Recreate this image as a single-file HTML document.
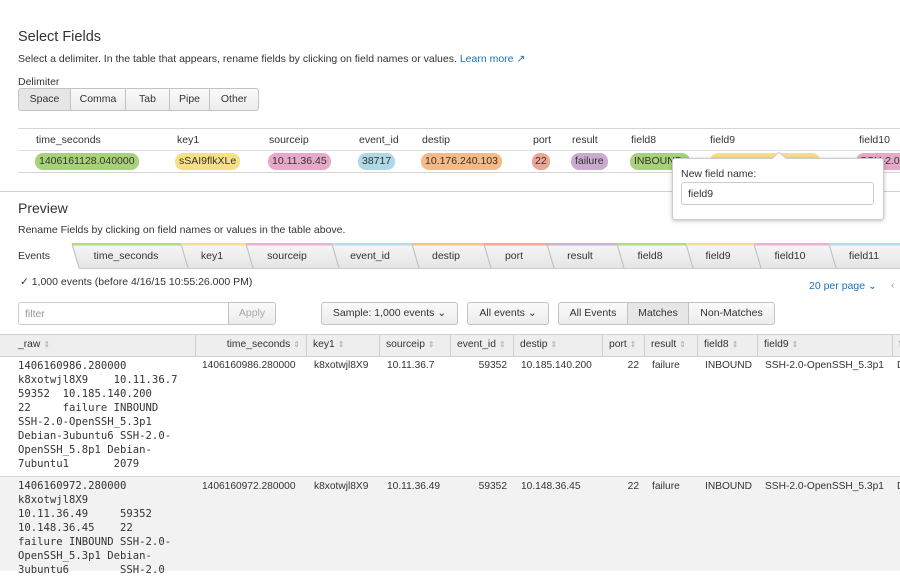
<!DOCTYPE html>
<html><head><meta charset="utf-8"><style>
*{box-sizing:border-box;margin:0;padding:0}
body{width:900px;height:571px;overflow:hidden;background:#fff;font-family:"Liberation Sans",sans-serif;font-size:10.5px;color:#333;position:relative}
.a{position:absolute;white-space:nowrap}
.btn{position:absolute;border:1px solid #c3c3c3;background:linear-gradient(#fafafa,#ececec);height:23px;line-height:21px;text-align:center;font-size:10.5px;color:#333}
.pill{position:absolute;top:153px;height:17px;line-height:17px;border-radius:8px;padding:0 4px;font-size:10.5px;color:#333}
.th{position:absolute;top:334px;height:23px;line-height:22px;border-right:1px solid #d0d0d0;padding:0 6px;font-size:10.3px}
.th i{font-style:normal;color:#aaa;font-size:8px;margin-left:3px}
.c{position:absolute;white-space:nowrap;font-size:10.2px}
.mono{font-family:"DejaVu Sans Mono","Liberation Mono",monospace;font-size:10.6px;line-height:14px;white-space:pre}
</style></head><body>
<div class="a" style="left:18px;top:29px;font-size:14.5px;color:#333">Select Fields</div>
<div class="a" style="left:18px;top:53px">Select a delimiter. In the table that appears, rename fields by clicking on field names or values. <span style="color:#1a73b8">Learn more &#x2197;&#xFE0E;</span></div>
<div class="a" style="left:18px;top:76px">Delimiter</div>
<div class="btn" style="left:18px;top:88px;width:53px;background:#e6e6e6;border-radius:3px 0 0 3px">Space</div>
<div class="btn" style="left:70px;top:88px;width:56px">Comma</div>
<div class="btn" style="left:125px;top:88px;width:45px">Tab</div>
<div class="btn" style="left:169px;top:88px;width:41px">Pipe</div>
<div class="btn" style="left:209px;top:88px;width:50px;border-radius:0 3px 3px 0">Other</div>

<div class="a" style="left:18px;top:128px;width:882px;border-top:1px solid #d5d5d5"></div>
<div class="a" style="left:18px;top:150px;width:882px;border-top:1px solid #e2e2e2"></div>
<div class="a" style="left:18px;top:172px;width:882px;border-top:1px solid #d5d5d5"></div>
<div class="a" style="top:134px;left:36px">time_seconds</div>
<div class="a" style="top:134px;left:177px">key1</div>
<div class="a" style="top:134px;left:269px">sourceip</div>
<div class="a" style="top:134px;left:359px">event_id</div>
<div class="a" style="top:134px;left:422px">destip</div>
<div class="a" style="top:134px;left:533px">port</div>
<div class="a" style="top:134px;left:572px">result</div>
<div class="a" style="top:134px;left:631px">field8</div>
<div class="a" style="top:134px;left:710px">field9</div>
<div class="a" style="top:134px;left:859px">field10</div>
<div class="pill" style="left:35px;background:#a8d27a">1406161128.040000</div>
<div class="pill" style="left:175px;background:#f7df86">sSAI9flkXLe</div>
<div class="pill" style="left:268px;background:#e7a9c9">10.11.36.45</div>
<div class="pill" style="left:358px;background:#acd9e5">38717</div>
<div class="pill" style="left:421px;background:#f6ba86">10.176.240.103</div>
<div class="pill" style="left:532px;padding:0 3px;background:#eca696">22</div>
<div class="pill" style="left:571px;background:#c8abcf">failure</div>
<div class="pill" style="left:630px;width:60px;background:#a8d27a;overflow:hidden">INBOUND</div>
<div class="pill" style="left:710px;width:110px;background:#f7df86"></div>
<div class="pill" style="left:856px;width:60px;background:#e7a9c9">SSH-2.0</div>

<div class="a" style="left:0;top:191px;width:900px;border-top:1px solid #d0d0d0"></div>
<div class="a" style="left:18px;top:200px;font-size:14px">Preview</div>
<div class="a" style="left:18px;top:224px">Rename Fields by clicking on field names or values in the table above.</div>

<svg class="a" style="left:0;top:243px" width="900" height="26">
<defs><linearGradient id="g" x1="0" y1="0" x2="0" y2="1"><stop offset="0" stop-color="#f7f7f7"/><stop offset="1" stop-color="#e4e4e4"/></linearGradient></defs>
<rect x="0" y="0" width="900" height="26" fill="url(#g)"/>
<line x1="0" y1="25.5" x2="900" y2="25.5" stroke="#ccc"/>
<path d="M0 0 H72 L79 26 H0Z" fill="#fff"/>
<g stroke="#bbb" fill="none">
<path d="M72 1 L79 25"/><path d="M181 1 L188 25"/><path d="M246 1 L253 25"/><path d="M332 1 L339 25"/><path d="M412 1 L419 25"/><path d="M484 1 L491 25"/><path d="M547 1 L554 25"/><path d="M617 1 L624 25"/><path d="M686 1 L693 25"/><path d="M754 1 L761 25"/><path d="M829 1 L836 25"/>
</g>
<g stroke-width="3">
<line x1="72" y1="1" x2="181" y2="1" stroke="#b5d98a"/>
<line x1="181" y1="1" x2="246" y2="1" stroke="#f5e08c"/>
<line x1="246" y1="1" x2="332" y2="1" stroke="#e8b4d0"/>
<line x1="332" y1="1" x2="412" y2="1" stroke="#b8dde6"/>
<line x1="412" y1="1" x2="484" y2="1" stroke="#f7c08e"/>
<line x1="484" y1="1" x2="547" y2="1" stroke="#eeaa99"/>
<line x1="547" y1="1" x2="617" y2="1" stroke="#c9b3d3"/>
<line x1="617" y1="1" x2="686" y2="1" stroke="#b5d98a"/>
<line x1="686" y1="1" x2="754" y2="1" stroke="#f5e08c"/>
<line x1="754" y1="1" x2="829" y2="1" stroke="#e8b4d0"/>
<line x1="829" y1="1" x2="900" y2="1" stroke="#b8dde6"/>
</g>
<g font-family="Liberation Sans, sans-serif" font-size="10.5" fill="#333" text-anchor="middle">
<text x="34" y="16">Events</text><text x="126" y="16">time_seconds</text><text x="212" y="16">key1</text><text x="287" y="16">sourceip</text><text x="370" y="16">event_id</text><text x="446" y="16">destip</text><text x="514" y="16">port</text><text x="580" y="16">result</text><text x="650" y="16">field8</text><text x="718" y="16">field9</text><text x="790" y="16">field10</text><text x="864" y="16">field11</text>
</g></svg>

<div class="a" style="left:20px;top:276px">&#10003; 1,000 events (before 4/16/15 10:55:26.000 PM)</div>
<div class="a" style="left:809px;top:280px;color:#1a73b8">20 per page &#8964;</div>
<div class="a" style="left:891px;top:279px;color:#999">&lsaquo;</div>

<div class="a" style="left:18px;top:302px;width:211px;height:23px;border:1px solid #ccc;border-radius:3px 0 0 3px;padding:5px 6px;color:#999">filter</div>
<div class="btn" style="left:228px;top:302px;width:48px;color:#aaa;border-radius:0 3px 3px 0">Apply</div>
<div class="btn" style="left:321px;top:302px;width:137px;border-radius:3px">Sample: 1,000 events &#8964;</div>
<div class="btn" style="left:467px;top:302px;width:82px;border-radius:3px">All events &#8964;</div>
<div class="btn" style="left:558px;top:302px;width:70px;border-radius:3px 0 0 3px">All Events</div>
<div class="btn" style="left:627px;top:302px;width:62px;background:#e6e6e6">Matches</div>
<div class="btn" style="left:688px;top:302px;width:87px;border-radius:0 3px 3px 0">Non-Matches</div>

<div class="a" style="left:0;top:334px;width:900px;height:23px;background:#eee;border-top:1px solid #d0d0d0;border-bottom:1px solid #d0d0d0"></div>
<div class="th" style="left:12px;width:184px">_raw<i>&#8661;</i></div>
<div class="th" style="left:196px;width:111px;text-align:right">time_seconds<i>&#8661;</i></div>
<div class="th" style="left:307px;width:73px">key1<i>&#8661;</i></div>
<div class="th" style="left:380px;width:71px">sourceip<i>&#8661;</i></div>
<div class="th" style="left:451px;width:63px">event_id<i>&#8661;</i></div>
<div class="th" style="left:514px;width:89px">destip<i>&#8661;</i></div>
<div class="th" style="left:603px;width:42px">port<i>&#8661;</i></div>
<div class="th" style="left:645px;width:53px">result<i>&#8661;</i></div>
<div class="th" style="left:698px;width:60px">field8<i>&#8661;</i></div>
<div class="th" style="left:758px;width:135px">field9<i>&#8661;</i></div>
<div class="th" style="left:893px;width:20px">f</div>

<div class="a" style="left:0;top:476px;width:900px;height:95px;background:#f2f2f2;border-top:1px solid #d8d8d8"></div>
<div class="a mono" style="left:18px;top:359px">1406160986.280000
k8xotwjl8X9    10.11.36.7
59352  10.185.140.200
22     failure INBOUND
SSH-2.0-OpenSSH_5.3p1
Debian-3ubuntu6 SSH-2.0-
OpenSSH_5.8p1 Debian-
7ubuntu1       2079</div>
<div class="a mono" style="left:18px;top:479px">1406160972.280000
k8xotwjl8X9
10.11.36.49     59352
10.148.36.45    22
failure INBOUND SSH-2.0-
OpenSSH_5.3p1 Debian-
3ubuntu6        SSH-2.0</div>
<div class="c" style="top:360px;left:202px">1406160986.280000</div>
<div class="c" style="top:360px;left:314px">k8xotwjl8X9</div>
<div class="c" style="top:360px;left:387px">10.11.36.7</div>
<div class="c" style="top:360px;left:451px;width:56px;text-align:right">59352</div>
<div class="c" style="top:360px;left:521px">10.185.140.200</div>
<div class="c" style="top:360px;left:603px;width:36px;text-align:right">22</div>
<div class="c" style="top:360px;left:652px">failure</div>
<div class="c" style="top:360px;left:705px">INBOUND</div>
<div class="c" style="top:360px;left:765px">SSH-2.0-OpenSSH_5.3p1</div>
<div class="c" style="top:360px;left:897px">D</div>
<div class="c" style="top:481px;left:202px">1406160972.280000</div>
<div class="c" style="top:481px;left:314px">k8xotwjl8X9</div>
<div class="c" style="top:481px;left:387px">10.11.36.49</div>
<div class="c" style="top:481px;left:451px;width:56px;text-align:right">59352</div>
<div class="c" style="top:481px;left:521px">10.148.36.45</div>
<div class="c" style="top:481px;left:603px;width:36px;text-align:right">22</div>
<div class="c" style="top:481px;left:652px">failure</div>
<div class="c" style="top:481px;left:705px">INBOUND</div>
<div class="c" style="top:481px;left:765px">SSH-2.0-OpenSSH_5.3p1</div>
<div class="c" style="top:481px;left:897px">D</div>

<div class="a" style="left:672px;top:158px;width:212px;height:62px;background:#fff;border:1px solid #ccc;border-radius:3px;box-shadow:0 1px 4px rgba(0,0,0,.25)"></div>
<svg class="a" style="left:770px;top:151px" width="18" height="9"><path d="M1 8.5 L9 1 L17 8.5" fill="#fff" stroke="#ccc"/><rect x="0" y="8" width="18" height="2" fill="#fff"/></svg>
<div class="a" style="left:681px;top:168px">New field name:</div>
<div class="a" style="left:681px;top:182px;width:193px;height:23px;border:1px solid #ccc;border-radius:3px;padding:5px 6px">field9</div>
</body></html>
